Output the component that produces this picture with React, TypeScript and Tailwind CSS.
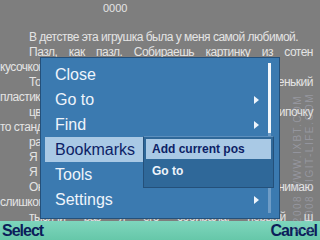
import React from 'react';

type Line = { text: string; indent?: boolean; justify?: boolean };

// text behind the popup, one entry per rendered line
const lines: Line[] = [
  { text: 'В детстве эта игрушка была у меня самой любимой.', indent: true },
  { text: 'Пазл, как пазл. Собираешь картинку из сотен', indent: true, justify: true },
  { text: 'кусочков и радуешься результату.' },
  { text: 'Только этот пазл был особенный: маленький', indent: true, justify: true },
  { text: 'пластиковый квадрат с фишками.' },
  { text: 'цветные фишки надо двигать за пипочку', indent: true, justify: true },
  { text: 'то стандартное поле из пятнадцати.' },
  { text: 'рассказывать о нём можно долго.', indent: true },
  { text: 'Я собирала его каждый вечер.', indent: true },
  { text: 'Я помню каждую фишку.', indent: true },
  { text: 'Он казался мне таким, я понимаю', indent: true, justify: true },
  { text: 'слишком поздно, как он был дорог.' },
  { text: 'тысячи раз я его собирала, первый ш', indent: true, justify: true },
];

type Item = { label: string; arrow?: boolean; active?: boolean };

const items: Item[] = [
  { label: 'Close' },
  { label: 'Go to', arrow: true },
  { label: 'Find', arrow: true },
  { label: 'Bookmarks', active: true },
  { label: 'Tools' },
  { label: 'Settings', arrow: true },
];

function Arrow() {
  return (
    <svg width="5" height="8" viewBox="0 0 5 8" className="block">
      <path d="M0 0 L5 4 L0 8 Z" fill="#eef4fb" />
    </svg>
  );
}

export default function App() {
  return (
    <div
      className="relative w-[320px] h-[240px] overflow-hidden bg-[#7e7e7e] flex flex-col"
      style={{ fontFamily: '"Liberation Sans", Arial, sans-serif' }}
    >
      <div className="flex-1 overflow-hidden text-[#e4e4e4]">
        <div className="h-[30px] pl-[103px] pt-[2px] text-[11px] leading-[12px]">0000</div>
        <div className="w-[313px] text-[12px] leading-[15px] tracking-[-0.5px]">
          {lines.map((l, i) => (
            <div
              key={i}
              className={`whitespace-nowrap ${l.indent ? 'pl-[29px]' : ''} ${
                l.justify ? 'text-justify [text-align-last:justify]' : ''
              }`}
            >
              {l.text}
            </div>
          ))}
        </div>
      </div>

      {/* soft keys */}
      <div className="h-[19px] flex items-end justify-between px-[2px] bg-gradient-to-b from-[#7ed6bd] to-[#66c7a9] text-[#0c1d5a] text-[16px] leading-[18px] font-bold tracking-[-1px]">
        <span>Select</span>
        <span className="pr-[1px]">Cancel</span>
      </div>

      {/* watermark */}
      <div className="absolute left-[292px] top-[232px] origin-top-left -rotate-90 whitespace-nowrap text-[10px] leading-[12px] tracking-[1.5px] text-[#b4b6c8]/45">
        <div>©2008 WWW.IXBT.COM</div>
        <div>©2008 DIGIT-LIFE.COM</div>
      </div>

      {/* options popup */}
      <div className="absolute left-[40px] top-[57px] w-[240px] h-[162px] bg-[#3b7ab0] border border-[#24507a] pt-[4px] pl-[4px]">
        {items.map((it) => (
          <div
            key={it.label}
            className={`h-[25px] w-[220px] flex items-center justify-between pl-[10px] pr-[6px] text-[16px] ${
              it.active ? 'bg-[#a9c9e5] text-[#0d1f66]' : 'text-[#eef4fb]'
            }`}
          >
            <span>{it.label}</span>
            {it.arrow && <Arrow />}
          </div>
        ))}
        {/* scrollbar */}
        <div className="absolute left-[227px] top-[5px] w-[3px] h-[150px] bg-[#6e9cc6]">
          <div className="w-[3px] h-[70px] bg-[#f4f8fc]" />
        </div>
      </div>

      {/* bookmarks submenu */}
      <div className="absolute left-[143px] top-[136px] w-[131px] h-[52px] bg-[#2f6899] border border-[#24507a] border-t-[#5d8fbd] pt-[2px] px-[2px] text-[12px] font-bold">
        <div className="h-[20px] flex items-center pl-[6px] bg-[#a9c9e5] text-[#0d1f66]">Add current pos</div>
        <div className="h-[23px] flex items-center pl-[6px] text-[#eef4fb]">Go to</div>
      </div>
    </div>
  );
}
